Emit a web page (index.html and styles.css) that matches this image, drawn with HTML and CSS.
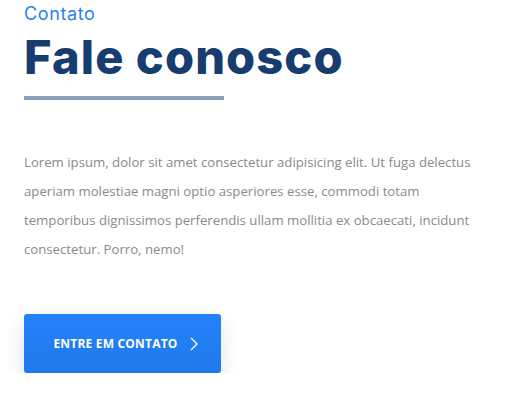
FILE: index.html
```html
<!DOCTYPE html>
<html lang="pt">
<head>
<meta charset="utf-8">
<title>Contato</title>
<link rel="stylesheet" href="styles.css">
</head>
<body>
<section class="contact">
  <p class="eyebrow">Contato</p>
  <h1 class="title">Fale conosco</h1>
  <div class="rule"></div>
  <p class="text">Lorem ipsum, dolor sit amet consectetur adipisicing elit. Ut fuga delectus aperiam molestiae magni optio asperiores esse, commodi totam temporibus dignissimos perferendis ullam mollitia ex obcaecati, incidunt consectetur. Porro, nemo!</p>
  <a class="btn" href="#">ENTRE EM CONTATO
    <svg class="chev" width="8" height="14" viewBox="0 0 8 14"><path d="M1 1l6 6-6 6" fill="none" stroke="#fff" stroke-width="1.4"/></svg>
  </a>
</section>
</body>
</html>
```
FILE: styles.css
```css
html, body { margin: 0; padding: 0; background: #fff; }
.contact {
  padding: 3px 24px 0 24px;
  display: flex;
  flex-direction: column;
  align-items: flex-start;
}
.eyebrow {
  margin: 0;
  font-family: "Inter", "Open Sans", sans-serif;
  font-weight: 400;
  font-size: 18px;
  letter-spacing: 0.6px;
  line-height: 22px;
  color: #2b83f0;
}
.title {
  margin: 6px 0 0 0;
  font-family: "Inter", sans-serif;
  font-weight: 800;
  font-size: 47px;
  line-height: 52px;
  color: #163d6e;
  letter-spacing: 1.1px;
}
.rule {
  margin-top: 13px;
  width: 200px;
  height: 4px;
  background: #8aa0bb;
}
.text {
  margin: 48px 0 0 0;
  font-family: "Open Sans", sans-serif;
  font-size: 13.2px;
  line-height: 29px;
  color: #8a8a8a;
  max-width: 480px;
}
.btn {
  margin-top: 50px;
  width: 197px;
  height: 59px;
  box-sizing: border-box;
  padding-left: 6px;
  display: flex;
  align-items: center;
  justify-content: center;
  gap: 12px;
  background: linear-gradient(#2382fb, #2079ea);
  border-radius: 3px;
  color: #fff;
  text-decoration: none;
  font-family: "Open Sans", sans-serif;
  font-weight: 700;
  font-size: 12px;
  letter-spacing: 0.2px;
  box-shadow: 0 8px 20px rgba(30, 60, 120, 0.15);
}
.chev { display: block; }
```
